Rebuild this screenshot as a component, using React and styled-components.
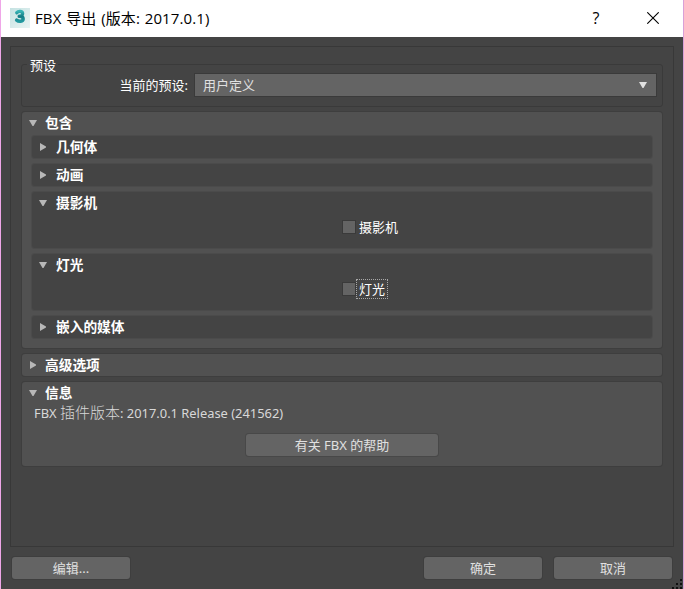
import React, { useState } from "react";
import styled, { createGlobalStyle } from "styled-components";

const App = () => {
  const [camera, setCamera] = useState(false);
  const [light, setLight] = useState(false);

  return (
    <Window>
      <GlobalStyle />
      <TitleBar>
        <Logo />
        <Title>FBX 导出 (版本: 2017.0.1)</Title>
        <HelpButton>?</HelpButton>
        <CloseButton>
          <svg width="12" height="12" viewBox="0 0 12 12">
            <path d="M0.3 0.3L11.7 11.7M11.7 0.3L0.3 11.7" stroke="#000" strokeWidth="1.1" />
          </svg>
        </CloseButton>
      </TitleBar>
      <Body>
        <Frame>
          <Preset>
            <PresetLegend>预设</PresetLegend>
            <PresetLabel>当前的预设:</PresetLabel>
            <Combo>
              <ComboText>用户定义</ComboText>
              <Arrow open color="#e0e0e0" />
            </Combo>
          </Preset>
          <Section title="包含" open height={236}>
            <Groups>
              <Section title="几何体" nested />
              <Section title="动画" nested />
              <Section title="摄影机" nested open height={56}>
                <CheckRow onClick={() => setCamera(!camera)}>
                  <CheckBox $checked={camera} />
                  <CheckLabel>摄影机</CheckLabel>
                </CheckRow>
              </Section>
              <Section title="灯光" nested open height={56}>
                <CheckRow onClick={() => setLight(!light)}>
                  <CheckBox $checked={light} />
                  <CheckLabel $focused>灯光</CheckLabel>
                </CheckRow>
              </Section>
              <Section title="嵌入的媒体" nested />
            </Groups>
          </Section>
          <Section title="高级选项" />
          <Section title="信息" open height={84}>
            <Version>
              FBX <VersionName>插件版本</VersionName>: 2017.0.1 Release (241562)
            </Version>
            <HelpLink>有关 FBX 的帮助</HelpLink>
          </Section>
        </Frame>
        <Footer>
          <EditButton>编辑...</EditButton>
          <Button>确定</Button>
          <Button>取消</Button>
        </Footer>
        <Grip />
      </Body>
    </Window>
  );
};

const Section = ({ title, open, nested, height = 22, children }) => (
  <SectionBox $nested={nested} $height={height}>
    <SectionHeader>
      <ArrowSlot>
        <Arrow open={open} />
      </ArrowSlot>
      <SectionTitle $nested={nested}>{title}</SectionTitle>
    </SectionHeader>
    {children}
  </SectionBox>
);

const Arrow = ({ open, color = "#b8b8b8" }) =>
  open ? (
    <svg width="8" height="6" viewBox="0 0 8 6">
      <path d="M0 0H8L4.5 6H3.5Z" fill={color} />
    </svg>
  ) : (
    <svg width="6" height="8" viewBox="0 0 6 8">
      <path d="M0 0L6 3.5V4.5L0 8Z" fill={color} />
    </svg>
  );

const Logo = () => (
  <LogoSvg width="20" height="20" viewBox="0 0 20 20">
    <defs>
      <linearGradient id="logoBg" x1="0" y1="0" x2="1" y2="1">
        <stop offset="0" stopColor="#c5e2e2" />
        <stop offset="1" stopColor="#e9f4f3" />
      </linearGradient>
      <linearGradient id="logoStroke" x1="0" y1="0" x2="0" y2="1">
        <stop offset="0" stopColor="#36b3b4" />
        <stop offset="0.5" stopColor="#137d85" />
        <stop offset="1" stopColor="#2299a0" />
      </linearGradient>
    </defs>
    <rect width="20" height="20" fill="url(#logoBg)" />
    <path
      d="M6.8 4.6C8.2 3 12.4 2.8 12.6 5.4C12.7 7.5 11.4 8.2 9.2 8.3C11.8 8.3 13.2 9.1 13.2 10.9C13.1 13.6 8.8 14 6.6 12.1"
      fill="none"
      stroke="url(#logoStroke)"
      strokeWidth="3.4"
      strokeLinecap="round"
      strokeLinejoin="round"
    />
  </LogoSvg>
);

const Grip = () => (
  <GripSvg width="10" height="10" viewBox="0 0 10 10">
    <path d="M8 0h2v2h-2zM4 4h2v2h-2zM8 4h2v2h-2zM0 8h2v2h-2zM4 8h2v2h-2zM8 8h2v2h-2z" fill="#101010" />
  </GripSvg>
);

export default App;

const GlobalStyle = createGlobalStyle`
  * {
    box-sizing: border-box;
  }
  body {
    margin: 0;
    overflow: hidden;
  }
`;

const Window = styled.div`
  display: flex;
  flex-direction: column;
  width: 684px;
  height: 589px;
  border-left: 1px solid #efa6e8;
  border-right: 1px solid #d9a0d8;
  background: #444;
  color: #fff;
  font-family: "Noto Sans", "Noto Sans CJK SC", sans-serif;
  font-size: 13px;
  cursor: default;
`;

const TitleBar = styled.div`
  display: flex;
  align-items: center;
  height: 37px;
  padding-left: 9px;
  background: #fff;
  color: #000;
`;

const LogoSvg = styled.svg`
  flex-shrink: 0;
  margin-bottom: 1px;
`;

const Title = styled.div`
  flex-grow: 1;
  margin: 0 0 2px 5px;
  font-family: "Open Sans", "Noto Sans CJK SC", sans-serif;
  font-size: 15px;
  letter-spacing: 0.1px;
  word-spacing: 0.8px;
  line-height: 20px;
  white-space: nowrap;
`;

const HelpButton = styled.div`
  width: 16px;
  margin-bottom: 2px;
  font-family: "Open Sans", sans-serif;
  font-size: 16px;
  line-height: 20px;
  text-align: center;
`;

const CloseButton = styled.div`
  display: flex;
  margin: 0 24px 1px 43px;
`;

const Body = styled.div`
  position: relative;
  flex-grow: 1;
  padding: 9px 9px 0;
`;

const Frame = styled.div`
  display: flex;
  flex-direction: column;
  gap: 6px;
  height: 501px;
  padding: 17px 11px 0;
  border: 1px solid #383838;
`;

const Preset = styled.div`
  position: relative;
  display: flex;
  align-items: center;
  height: 43px;
  margin: 0 -1px -1px;
  padding: 0 5px 2px 0;
  border: 1px solid #3a3a3a;
  border-radius: 3px;
`;

const PresetLegend = styled.div`
  position: absolute;
  top: -10px;
  left: 5px;
  padding: 0 2px 0 3px;
  background: #444;
  line-height: 20px;
`;

const PresetLabel = styled.div`
  width: 166px;
  margin-right: 6px;
  text-align: right;
  white-space: nowrap;
`;

const Combo = styled.div`
  display: flex;
  flex-grow: 1;
  align-items: center;
  justify-content: space-between;
  height: 24px;
  padding: 0 9px 0 8px;
  border: 1px solid #3a3a3a;
  background: #646464;
  color: #e0e0e0;
`;

const ComboText = styled.div`
  line-height: 20px;
`;

const SectionBox = styled.div`
  height: ${(props) => props.$height}px;
  flex-shrink: 0;
  border-radius: 3px;
  background: ${(props) => (props.$nested ? "#444" : "#515151")};
  box-shadow: 0 0 0 1px ${(props) => (props.$nested ? "#4b4b4b" : "#3e3e3e")};
`;

const SectionHeader = styled.div`
  display: flex;
  align-items: center;
  height: 22px;
`;

const ArrowSlot = styled.div`
  display: flex;
  justify-content: center;
  width: 22px;
`;

const SectionTitle = styled.div`
  margin-left: ${(props) => (props.$nested ? 2 : 1)}px;
  font-weight: 700;
  font-size: 13.7px;
  line-height: 20px;
`;

const Groups = styled.div`
  display: flex;
  flex-direction: column;
  gap: 6px;
  padding: 2px 10px 0;
`;

const CheckRow = styled.div`
  display: flex;
  align-items: center;
  height: 26px;
  padding-left: 310px;
`;

const CheckBox = styled.div`
  width: 14px;
  height: 14px;
  border: 1px solid #3a3a3a;
  background: ${(props) => (props.$checked ? "#b8b8b8" : "#646464")};
`;

const CheckLabel = styled.div`
  padding: 0 2px;
  border: 1px dotted ${(props) => (props.$focused ? "#a8a8a8" : "transparent")};
  line-height: 18px;
`;

const Version = styled.div`
  margin-top: -2px;
  padding-left: 12px;
  color: #d8d8d8;
  font-size: 12.9px;
  line-height: 20px;
  white-space: nowrap;
`;

const VersionName = styled.span`
  font-size: 15px;
  font-weight: 300;
`;

const Button = styled.div`
  width: 118px;
  height: 22px;
  border-radius: 3px;
  background: #646464;
  box-shadow: 0 0 0 1px #3e3e3e;
  color: #e0e0e0;
  line-height: 22px;
  text-align: center;
`;

const HelpLink = styled(Button)`
  width: 192px;
  margin: 11px auto 0;
  box-shadow: 0 0 0 1px #484848;
`;

const Footer = styled.div`
  display: flex;
  gap: 12px;
  padding: 10px 2px 0;
`;

const EditButton = styled(Button)`
  margin-right: auto;
`;

const GripSvg = styled.svg`
  position: absolute;
  right: 1px;
  bottom: 0;
`;
